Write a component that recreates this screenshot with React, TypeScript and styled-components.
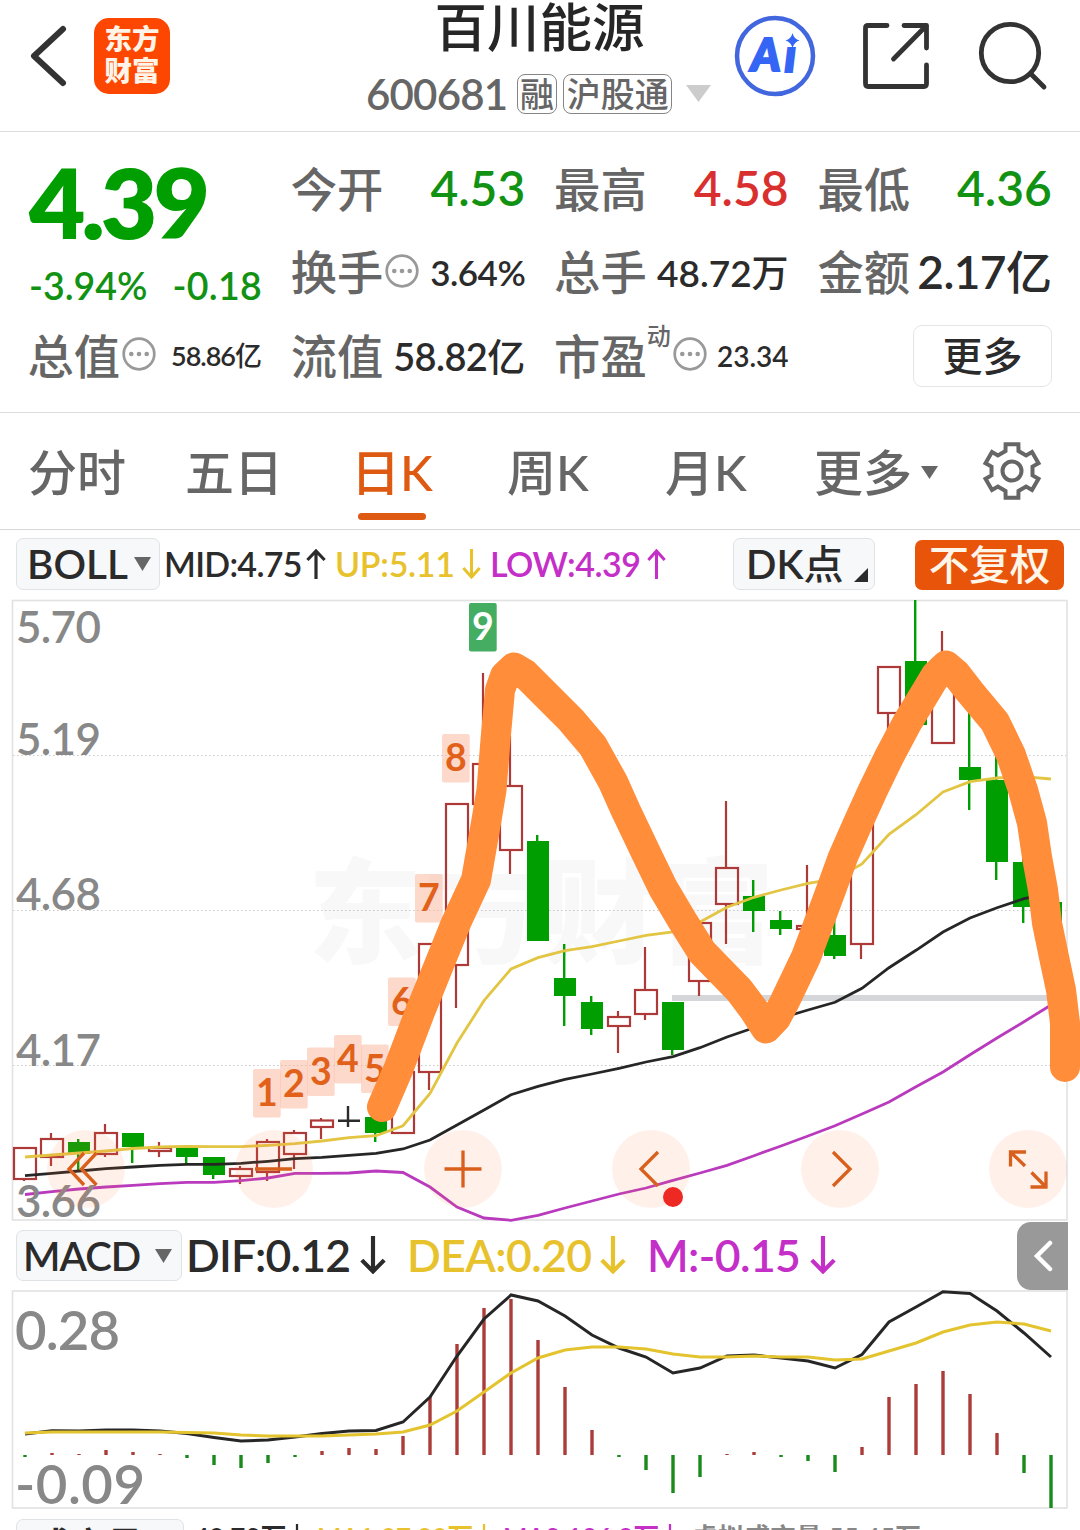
import React from "react";
import styled, { createGlobalStyle } from "styled-components";

const GREEN = "#009e00";
const RED = "#d9302f";
const INK = "#2b2b2b";
const GREY = "#666";
const YELLOW = "#e8c22c";
const PURPLE = "#c42fc8";
const ORANGE = "#de5a12";

const Global = createGlobalStyle`
  * { box-sizing: border-box; }
  body { margin: 0; background: #fff; overflow: hidden; }
  body, text { font-family: Lato, "Noto Sans CJK SC", sans-serif; }
`;

const Page = styled.main`
  width: 1080px;
  height: 1530px;
  overflow: hidden;
  background: #fff;
  color: ${INK};
  font-weight: 500;
  line-height: 1;
  white-space: nowrap;
`;

/* ---------- header ---------- */

const Header = styled.header`
  display: grid;
  grid-template-columns: 366px 345px 1fr;
  height: 132px;
  border-bottom: 1.5px solid #dcdcdc;
`;

const HeaderLeft = styled.div`
  display: flex;
  align-items: center;
  gap: 22px;
  height: 112px;
  padding-left: 28px;
`;

const Logo = styled.div`
  display: flex;
  flex-direction: column;
  align-items: center;
  justify-content: center;
  gap: 5px;
  width: 76px;
  height: 76px;
  padding-bottom: 3px;
  border-radius: 15px;
  background: #fd4600;
  color: #fff4e8;
  font-size: 27.5px;
  font-weight: 800;
  span { height: 27px; line-height: 27px; }
`;

const HeaderTitle = styled.div`
  display: flex;
  flex-direction: column;
  align-items: center;
`;

const Name = styled.h1`
  margin: 0;
  height: 72px;
  padding: 0 0 0 2px;
  font-size: 52.5px;
  font-weight: 500;
  line-height: 54px;
  color: #262626;
`;

const CodeLine = styled.div`
  display: flex;
  align-items: center;
  width: 345px;
  height: 44px;
  color: ${GREY};
`;

const Badge = styled.span<{ $w: number }>`
  display: flex;
  align-items: center;
  justify-content: center;
  width: ${(p) => p.$w}px;
  height: 40px;
  margin-right: 6px;
  border: 1.5px solid #858585;
  border-radius: 8px;
  font-size: 34px;
`;

const HeaderRight = styled.div`
  display: flex;
  align-items: center;
  height: 112px;
  padding-left: 22px;
  gap: 44px;
`;

/* ---------- text with a tuned face ---------- */

const Num = styled.span<{ $size: number; $color?: string; $ls?: number; $w?: number; $weight?: number }>`
  display: block;
  flex: none;
  ${(p) => p.$w && `width: ${p.$w}px;`}
  font-size: ${(p) => p.$size}px;
  font-weight: ${(p) => p.$weight ?? 600};
  color: ${(p) => p.$color ?? INK};
  letter-spacing: ${(p) => p.$ls ?? 0}px;
`;

const Unit = styled.span`
  font-weight: 500;
  letter-spacing: 0;
`;

/* ---------- quote ---------- */

const Quote = styled.section`
  display: grid;
  grid-template-columns: repeat(4, 233px);
  grid-template-rows: repeat(3, 83.5px);
  column-gap: 30.3px;
  height: 281px;
  padding: 15px 29px 0;
  border-bottom: 1.5px solid #dcdcdc;
`;

const PriceCell = styled.div`
  grid-row: span 2;
  display: grid;
  grid-template-rows: 109px 60px;
  align-items: center;
`;

const ChangeRow = styled.div`
  display: flex;
  justify-content: space-between;
`;

const Cell = styled.div`
  display: flex;
  align-items: center;
`;

const Label = styled.span`
  margin-left: -1.5px;
  font-size: 46.3px;
  color: ${GREY};
`;

const Sup = styled.sup`
  align-self: flex-start;
  margin-top: 10px;
  font-size: 24px;
  line-height: 1;
  color: ${GREY};
`;

const Push = styled.span`
  margin-left: auto;
`;

const MoreButton = styled.button`
  width: 139px;
  height: 62px;
  margin-left: auto;
  padding: 0;
  border: 1.5px solid #e4e4e4;
  border-radius: 9px;
  background: #fff;
  font: 500 40px/1 Lato, "Noto Sans CJK SC", sans-serif;
  color: ${INK};
`;

/* ---------- tabs ---------- */

const Tabs = styled.nav`
  display: flex;
  height: 117px;
  padding-left: 28px;
  border-bottom: 1.5px solid #d5d9dc;
`;

const Tab = styled.div<{ $w: number; $on?: boolean }>`
  display: flex;
  flex-direction: column;
  width: ${(p) => p.$w}px;
  padding-top: 34px;
  font-size: 49px;
  line-height: 50px;
  color: ${(p) => (p.$on ? ORANGE : GREY)};
`;

const TabText = styled.span<{ $shift?: number }>`
  display: flex;
  align-items: center;
  gap: 9px;
  margin-left: ${(p) => p.$shift ?? 0}px;
`;

const Underline = styled.i`
  width: 68px;
  height: 7px;
  margin: 16px 0 0 5px;
  border-radius: 4px;
  background: ${ORANGE};
`;

const GearBox = styled.div`
  padding: 28px 0 0 1px;
`;

/* ---------- indicator bars ---------- */

const Bar = styled.div<{ $h: number; $top: number }>`
  display: flex;
  align-items: flex-start;
  height: ${(p) => p.$h}px;
  padding: ${(p) => p.$top}px 0 0 16px;
`;

const Chip = styled.div<{ $w: number; $h?: number; $gap?: number; $pl?: number }>`
  display: flex;
  flex: none;
  align-items: center;
  gap: ${(p) => p.$gap ?? 4}px;
  width: ${(p) => p.$w}px;
  height: ${(p) => p.$h ?? 52}px;
  padding-left: ${(p) => p.$pl ?? 10}px;
  border: 1.5px solid #dfe3e6;
  border-radius: 7px;
  background: #f7f8fa;
`;

const Readings = styled.div<{ $w: number }>`
  display: flex;
  align-items: center;
  flex: none;
  width: ${(p) => p.$w}px;
  height: 52px;
`;

const AdjustChip = styled.div`
  display: flex;
  align-items: center;
  justify-content: center;
  width: 149px;
  height: 50px;
  margin: 2px 0 0 40px;
  border-radius: 7px;
  background: #e8550a;
  color: #fff6ea;
  font-size: 40.5px;
`;

const Collapse = styled.button`
  display: flex;
  align-items: center;
  justify-content: center;
  width: 51px;
  height: 68px;
  margin: 1px 12px 0 auto;
  padding: 0;
  border: 0;
  border-radius: 14px 0 0 14px;
  background: #999;
`;

/* ---------- charts ---------- */

const ChartWrap = styled.div`
  position: relative;
  height: 620px;
`;

const Plot = styled.svg`
  display: block;
  overflow: visible;
`;

const Ink = styled(Plot)`
  position: absolute;
  left: 0;
  top: 0;
  z-index: 2;
`;

const Tools = styled.div`
  position: absolute;
  left: 47px;
  top: 529px;
  display: flex;
  gap: 110.4px;
  width: 1020px;
  height: 78px;
  overflow: hidden;
`;

const Tool = styled.button`
  flex: none;
  width: 78px;
  height: 78px;
  padding: 0;
  border: 0;
  border-radius: 50%;
  background: rgba(255, 120, 60, 0.11);
  svg { display: block; }
`;

const Dot = styled.i`
  position: absolute;
  left: 663px;
  top: 586px;
  width: 20px;
  height: 20px;
  border-radius: 50%;
  background: #ee2822;
`;

/* ---------- small icons ---------- */

const Down = ({ w = 17, h = 14, c = GREY }: { w?: number; h?: number; c?: string }) => (
  <svg width={w} height={h} viewBox="0 0 17 14" preserveAspectRatio="none">
    <path d="M0 0H17L8.5 14Z" fill={c} />
  </svg>
);

const Arrow = ({ up, h, c, w }: { up?: boolean; h: number; c: string; w: number }) => (
  <svg
    width={w}
    height={h}
    viewBox="0 0 20 30"
    preserveAspectRatio="none"
    fill="none"
    stroke={c}
    strokeWidth="3.2"
  >
    <path d={up ? "M10 30V2M1.4 11L10 2L18.6 11" : "M10 0V28M1.4 19L10 28L18.6 19"} />
  </svg>
);

const Dots = () => (
  <svg width="34" height="34" viewBox="0 0 34 34" fill="#999" style={{ marginLeft: 2, marginTop: -3 }}>
    <circle cx="17" cy="17" r="15.3" fill="none" stroke="#999" strokeWidth="2.7" />
    <circle cx="9.3" cy="17" r="2.3" />
    <circle cx="17" cy="17" r="2.3" />
    <circle cx="24.7" cy="17" r="2.3" />
  </svg>
);

const gearPath = (() => {
  const pts: string[] = [];
  const at = (r: number, deg: number) => {
    const a = (deg * Math.PI) / 180;
    pts.push(`${(30 + r * Math.sin(a)).toFixed(1)} ${(30 - r * Math.cos(a)).toFixed(1)}`);
  };
  for (let k = 0; k < 6; k++) {
    const m = k * 60;
    at(21, m - 18);
    at(27.6, m - 13.5);
    at(27.6, m + 13.5);
    at(21, m + 18);
  }
  return `M${pts.join("L")}Z`;
})();

/* ---------- data ---------- */

const X = (i: number) => 25 + 27 * i;

// kind, body top, body bottom, high, low
type Candle = ["r" | "g" | "d", number, number, number, number];
const candles: Candle[] = [
  ["r", 1148, 1179, 1148, 1181], ["r", 1139, 1157, 1133, 1166], ["g", 1142, 1154, 1139, 1170],
  ["r", 1133, 1154, 1124, 1157], ["g", 1133, 1147, 1133, 1163], ["r", 1148, 1151, 1142, 1157],
  ["g", 1148, 1157, 1148, 1165], ["g", 1157, 1175, 1157, 1179], ["r", 1169, 1176, 1166, 1184],
  ["r", 1142, 1172, 1139, 1181], ["r", 1133, 1154, 1130, 1169], ["r", 1120.5, 1127, 1118, 1139],
  ["d", 1120.7, 1120.7, 1106, 1127], ["g", 1117, 1133, 1117, 1142], ["r", 1072, 1133, 1072, 1133],
  ["r", 944, 1072, 944, 1090], ["r", 804, 965, 804, 1008], ["r", 764, 804, 673, 804],
  ["r", 786, 850, 736, 874], ["g", 841, 941, 835, 941], ["g", 978, 996, 944, 1026],
  ["g", 1002, 1029, 996, 1035], ["r", 1017, 1026, 1011, 1053], ["r", 990, 1014, 947, 1020],
  ["g", 1002, 1050, 1002, 1055], ["r", 923, 981, 923, 996], ["r", 868, 904, 801, 944],
  ["g", 896, 911, 880, 932], ["g", 920, 929, 911, 935], ["r", 926, 929, 865, 929],
  ["g", 935, 956, 916, 959], ["r", 818, 944, 818, 959], ["r", 667, 713, 667, 740],
  ["g", 661, 725, 600, 725], ["r", 680, 743, 631, 743], ["g", 767, 780, 700, 810],
  ["g", 780, 862, 740, 880], ["g", 862, 907, 840, 923], ["g", 902, 927, 902, 927],
];
const upper = [1157, 1155, 1153, 1151, 1148.5, 1147, 1146.3, 1146.7, 1146.7, 1145.3, 1143.7, 1141, 1137.7, 1135.7, 1125.7, 1093.5, 1043, 1000.7, 969, 957.7, 950.7, 946.7, 941, 935.3, 932, 922, 907.3, 897.3, 890, 883.3, 879, 864, 834.3, 814.7, 792, 781.7, 778, 776.7, 779];
const middle = [1175.7, 1173.3, 1171, 1168.7, 1167, 1165.3, 1164.3, 1164.3, 1163.3, 1161.3, 1158.7, 1157.3, 1155.3, 1153.3, 1149, 1140, 1125, 1110, 1094.7, 1086.3, 1079.3, 1074, 1068.3, 1062, 1056.7, 1047.7, 1037, 1027.7, 1018, 1010, 1002.3, 988.3, 967.7, 950.3, 932, 918, 907.7, 898.7, 893];
const lower = [1194.5, 1191.7, 1189, 1187, 1185.3, 1183.7, 1182.3, 1182.3, 1180.7, 1178, 1173.3, 1173.3, 1173, 1171, 1172.5, 1187, 1207, 1218, 1220.3, 1215.3, 1208, 1201, 1194, 1188, 1180.3, 1173, 1165.3, 1155.7, 1146, 1136, 1125.7, 1114, 1102, 1086.7, 1072, 1054.7, 1038, 1021.7, 1005];
const bars = [1457, 1453, 1454, 1450, 1452, 1454, 1458, 1465, 1468, 1463, 1457, 1451, 1448, 1449, 1436, 1397, 1344, 1308, 1299, 1340, 1387, 1430, 1457, 1470, 1493, 1477, 1454, 1452, 1457, 1461, 1472, 1447, 1397, 1384, 1371, 1394, 1433, 1473, 1508];
const dif = [1434, 1430.7, 1431, 1430, 1430, 1431, 1433.5, 1437.5, 1441, 1440, 1437, 1433.5, 1431, 1430.5, 1422, 1397, 1356, 1319, 1295, 1301, 1316, 1335, 1348, 1357, 1373, 1368, 1356, 1355, 1358, 1361, 1368, 1354.5, 1322, 1307, 1291.7, 1293.5, 1311, 1333, 1357];
const dea = [1433, 1432, 1432, 1432, 1432, 1432, 1432.5, 1433, 1435, 1436, 1436, 1436, 1435, 1434, 1432, 1425, 1411, 1392, 1373, 1358, 1350, 1347, 1347, 1349, 1354, 1357, 1357, 1356, 1357, 1357, 1360, 1359, 1351, 1343, 1332, 1325, 1322, 1324, 1331];
const tags: [string, number][] = [["1", 1069], ["2", 1060], ["3", 1047.5], ["4", 1035], ["5", 1044.5], ["6", 977.5], ["7", 874], ["8", 734], ["9", 603]];
const marker: [number, number][] = [
  [382, 1107], [398, 1070], [420, 1012], [439, 965], [456, 923], [476, 880], [486, 823], [491.5, 790], [495.5, 740], [500, 690],
  [505, 676], [514, 667.5], [525, 674], [541, 690], [571, 720], [593, 746], [613, 782], [626, 811], [647, 855], [663, 888], [682, 920],
  [702, 952], [739, 990], [754, 1010], [766, 1028.5], [776, 1018], [784, 1003], [806, 957], [818, 925], [831, 890], [843, 857],
  [858, 823], [873, 790], [889, 757], [907, 723], [927, 690], [936, 675], [946, 665.5], [956, 674], [970, 692], [995, 722], [1011, 755],
  [1023, 790], [1032, 823], [1037, 857], [1043, 890], [1047, 923], [1054, 957], [1061, 990], [1065, 1023], [1065, 1067],
];

const line = (ys: number[]) => ys.map((y, i) => `${X(i)},${y}`).join(" ");

const CandleMark = ({ c, i }: { c: Candle; i: number }) => {
  const x = X(i);
  const [kind, top, bottom, high, low] = c;
  if (kind === "g")
    return (
      <g fill={GREEN}>
        <rect x={x - 2} y={high} width="2.4" height={low - high} />
        <rect x={x - 11} y={top} width="22" height={bottom - top} />
      </g>
    );
  if (kind === "d")
    return <path d={`M${x - 11} ${top}H${x + 11}M${x - 1} ${high}V${low}`} stroke={INK} strokeWidth="2.4" />;
  return (
    <g fill="none" stroke="#ad3a38" strokeWidth="2.2">
      <rect x={x - 11} y={top} width="22" height={bottom - top} />
      <path d={`M${x - 1} ${high}V${top}M${x - 1} ${bottom}V${low}`} />
    </g>
  );
};

const PriceChart = () => (
  <Plot width="1080" height="620" viewBox="0 601 1080 620">
    <text x="308" y="954" fontSize="114" fontWeight="900" fill="#f8f8f8" textLength="466">东方财富</text>
    <g stroke="#c9c9c9" strokeWidth="1" strokeDasharray="1.5 2.5">
      <path d="M13 755.5H1067M13 910.5H1067M13 1065.5H1067" />
    </g>
    <rect x="12.5" y="600.5" width="1054.5" height="619.5" fill="none" stroke="#e2e2e2" strokeWidth="1.6" />
    <rect x="672" y="995" width="395" height="6" fill="#d4d6d9" />
    {candles.map((c, i) => <CandleMark key={i} c={c} i={i} />)}
    <g fill="none" strokeWidth="2.8">
      <polyline points={line(upper)} stroke="#e3c544" />
      <polyline points={line(middle)} stroke="#262626" />
      <polyline points={line(lower)} stroke="#b93abd" />
    </g>
    {tags.map(([n, y], i) => (
      <g key={n}>
        <rect x={253 + 27 * i} y={y} width="27.7" height="48.5" rx="2" fill={n === "9" ? "#44ad62" : "#fab79b"} fillOpacity={n === "9" ? 1 : 0.52} />
        <text x={266.8 + 27 * i} y={y + 37} textAnchor="middle" fontSize="37.5" fontWeight="700" fill={n === "9" ? "#fff" : "#e2611a"}>{n}</text>
      </g>
    ))}
    <g fontSize="44" fontWeight="600" fill="#888">
      <text x="16" y="643" textLength="85">5.70</text>
      <text x="16" y="755" textLength="85">5.19</text>
      <text x="16" y="910" textLength="85">4.68</text>
      <text x="16" y="1066" textLength="85">4.17</text>
      <text x="16" y="1217" textLength="85">3.66</text>
    </g>
  </Plot>
);

const MacdChart = () => (
  <Plot width="1080" height="219" viewBox="0 1290 1080 219">
    <rect x="12.5" y="1291" width="1054.5" height="217" fill="none" stroke="#e2e2e2" strokeWidth="1.6" />
    {bars.map((y, i) => (
      <rect key={i} x={X(i) - 1.7} y={Math.min(y, 1455)} width="3.4" height={Math.abs(y - 1455)} fill={y > 1455 ? "#198a1c" : "#ab3c3a"} />
    ))}
    <g fill="none" strokeWidth="3">
      <polyline points={line(dif)} stroke="#262626" />
      <polyline points={line(dea)} stroke="#e3c32e" />
    </g>
    <g fontSize="54.5" fontWeight="600" fill="#888">
      <text x="15" y="1350" textLength="105">0.28</text>
      <text x="15" y="1504" textLength="130">-0.09</text>
    </g>
  </Plot>
);

const toolIcons = [
  "M37 23L22 39L37 55M49.5 23L34.5 39L49.5 55",
  "M20 39H57",
  "M39 20.5V57.5M20.5 39H57.5",
  "M46 22L29 39L46 56",
  "M32 22L49 39L32 56",
  "M21.5 36.5V22H37M22 22.5L36 36M41.5 57H57V41.5M56.5 56.5L42.5 42.5",
];

export default function App() {
  return (
    <Page>
      <Global />
      <Header>
        <HeaderLeft>
          <svg width="44" height="64" viewBox="0 0 44 64" fill="none" stroke="#333" strokeWidth="6" strokeLinecap="round" strokeLinejoin="round">
            <path d="M35 5L6 32L35 59" />
          </svg>
          <Logo>
            <span>东方</span>
            <span>财富</span>
          </Logo>
        </HeaderLeft>
        <HeaderTitle>
          <Name>百川能源</Name>
          <CodeLine>
            <Num $size={42} $color={GREY} $w={150.5} $ls={-0.8}>600681</Num>
            <Badge $w={41}>融</Badge>
            <Badge $w={109}>沪股通</Badge>
            <span style={{ marginLeft: 8 }}><Down w={25} h={17} c="#ccc" /></span>
          </CodeLine>
        </HeaderTitle>
        <HeaderRight>
          <svg width="84" height="84" viewBox="0 0 84 84">
            <circle cx="42" cy="42" r="38" fill="none" stroke="#4266de" strokeWidth="4.5" />
            <g fill="#3465f5" stroke="#3465f5" strokeWidth="2.2" fontSize="45" fontWeight="900" fontStyle="italic">
              <text x="18" y="57">A</text>
              <text x="51.5" y="58" fontSize="46">ı</text>
            </g>
            <path d="M59.500 19Q61 25 66.500 26.500Q61 28 59.500 34Q58 28 52.500 26.500Q58 25 59.500 19Z" fill="#3465f5" />
          </svg>
          <svg width="68" height="68" viewBox="0 0 68 68" fill="none" stroke="#333" strokeWidth="4.8" strokeLinecap="round" strokeLinejoin="round" style={{ marginLeft: 1 }}>
            <path d="M25 3.5H6Q3.5 3.5 3.5 6V61Q3.5 64.5 6 64.5H62Q64.5 64.5 64.5 61.5V43M42 3.5H64.500V26M64.5 3.5L31.5 37" />
          </svg>
          <svg width="70" height="70" viewBox="0 0 70 70" fill="none" stroke="#333" strokeWidth="4.8" strokeLinecap="round" style={{ marginLeft: 4 }}>
            <circle cx="32" cy="32" r="28.7" />
            <path d="M53 53L66 66" />
          </svg>
        </HeaderRight>
      </Header>

      <Quote>
        <PriceCell>
          <Num $size={97.5} $color={GREEN} $weight={800} $ls={-4}>4.39</Num>
          <ChangeRow>
            <Num $size={37.5} $color="#129212">-3.94%</Num>
            <Num $size={37.5} $color="#129212" $ls={0.3}>-0.18</Num>
          </ChangeRow>
        </PriceCell>
        <Cell><Label>今开</Label><Push /><Num $size={48} $color="#129212" style={{ marginTop: -2 }}>4.53</Num></Cell>
        <Cell><Label>最高</Label><Push /><Num $size={48} $color={RED} style={{ marginTop: -2 }}>4.58</Num></Cell>
        <Cell><Label>最低</Label><Push /><Num $size={48} $color="#129212" style={{ marginTop: -2 }}>4.36</Num></Cell>
        <Cell><Label>换手</Label><Dots /><Push /><Num $size={35} $ls={-0.5}>3.64%</Num></Cell>
        <Cell><Label>总手</Label><Push /><Num $size={37}>48.72<Unit>万</Unit></Num></Cell>
        <Cell><Label>金额</Label><Push /><Num $size={46} $ls={-0.6}>2.17<Unit>亿</Unit></Num></Cell>
        <Cell><Label>总值</Label><Dots /><Push /><Num $size={27} $ls={-1}>58.86<Unit>亿</Unit></Num></Cell>
        <Cell><Label>流值</Label><Push /><Num $size={38} $ls={-0.6}>58.82<Unit>亿</Unit></Num></Cell>
        <Cell><Label>市盈</Label><Sup>动</Sup><Dots /><Push /><Num $size={28}>23.34</Num></Cell>
        <Cell><MoreButton>更多</MoreButton></Cell>
      </Quote>

      <Tabs>
        <Tab $w={157}>分时</Tab>
        <Tab $w={168}>五日</Tab>
        <Tab $w={154} $on><TabText $shift={-2}>日K</TabText><Underline /></Tab>
        <Tab $w={158}>周K</Tab>
        <Tab $w={149}>月K</Tab>
        <Tab $w={167}><TabText>更多<Down h={13} /></TabText></Tab>
        <GearBox>
          <svg width="60" height="60" viewBox="0 0 60 60" fill="none" stroke={GREY} strokeWidth="4">
            <path d={gearPath} />
            <circle cx="30" cy="30" r="9.5" />
          </svg>
        </GearBox>
      </Tabs>

      <Bar $h={71} $top={8}>
        <Chip $w={144}><Num $size={40.5} $w={103}>BOLL</Num><Down /></Chip>
        <Readings $w={573}>
          <span style={{ width: 4 }} />
          <Num $size={34} $w={142} $ls={-0.7}>MID:4.75</Num><Arrow up w={20} h={30} c={INK} />
          <span style={{ width: 9 }} />
          <Num $size={34} $w={127} $color={YELLOW} $ls={-0.3}>UP:5.11</Num><Arrow w={19} h={30} c={YELLOW} />
          <span style={{ width: 9 }} />
          <Num $size={34} $w={157} $color={PURPLE} $ls={-0.5}>LOW:4.39</Num><Arrow up w={19} h={30} c={PURPLE} />
        </Readings>
        <Chip $w={142} $pl={12}>
          <Num $size={40} $w={104}>DK<Unit>点</Unit></Num>
          <svg width="14" height="14" style={{ marginTop: 22 }}><path d="M14 0V14H0Z" fill={INK} /></svg>
        </Chip>
        <AdjustChip>不复权</AdjustChip>
      </Bar>

      <ChartWrap>
        <PriceChart />
        <Tools>
          {toolIcons.map((d, i) => (
            <Tool key={i}>
              <svg width="78" height="78" viewBox="0 0 78 78" fill="none" stroke="#d9601c" strokeWidth="3.3">
                <path d={d} />
              </svg>
            </Tool>
          ))}
        </Tools>
        <Dot />
        <Ink width="1080" height="620" viewBox="0 601 1080 620">
          <polyline points={marker.map((p) => p.join()).join(" ")} fill="none" stroke="#ff8d3a" strokeWidth="30" strokeLinecap="round" strokeLinejoin="round" />
        </Ink>
      </ChartWrap>

      <Bar $h={69} $top={0}>
        <Chip $w={166} $h={51} $pl={6} $gap={14} style={{ marginTop: 9 }}><Num $size={40} $w={118} $ls={-1}>MACD</Num><Down /></Chip>
        <Readings $w={700} style={{ height: 68 }}>
          <span style={{ width: 4 }} />
          <Num $size={44.5} $w={174} $ls={-0.8}>DIF:0.12</Num><Arrow w={26} h={38} c={INK} />
          <span style={{ width: 21 }} />
          <Num $size={44.5} $w={193} $color={YELLOW} $ls={-0.6}>DEA:0.20</Num><Arrow w={26} h={38} c={YELLOW} />
          <span style={{ width: 21 }} />
          <Num $size={44.5} $w={163} $color={PURPLE} $ls={-0.6}>M:-0.15</Num><Arrow w={26} h={38} c={PURPLE} />
        </Readings>
        <Collapse>
          <svg width="24" height="36" viewBox="0 0 24 36" fill="none" stroke="#fff" strokeWidth="4.5" strokeLinecap="round">
            <path d="M19 5L6 18L19 31" />
          </svg>
        </Collapse>
      </Bar>

      <MacdChart />

      <Bar $h={60} $top={10}>
        <Chip $w={168} $pl={18}><Num $size={36}>成交量</Num></Chip>
        <Readings $w={800} style={{ height: 36 }}>
          <span style={{ width: 10 }} />
          <Num $size={26} $w={96}>48.72万</Num><Arrow w={14} h={26} c={INK} />
          <span style={{ width: 13 }} />
          <Num $size={26} $w={160} $color={YELLOW}>MA1:87.98万</Num><Arrow w={14} h={26} c={YELLOW} />
          <span style={{ width: 12 }} />
          <Num $size={26} $w={160} $color={PURPLE}>MA2:106.9万</Num><Arrow w={14} h={26} c={PURPLE} />
          <span style={{ width: 15 }} />
          <Num $size={26} $color="#888">虚拟成交量:55.45万</Num>
        </Readings>
      </Bar>
    </Page>
  );
}
